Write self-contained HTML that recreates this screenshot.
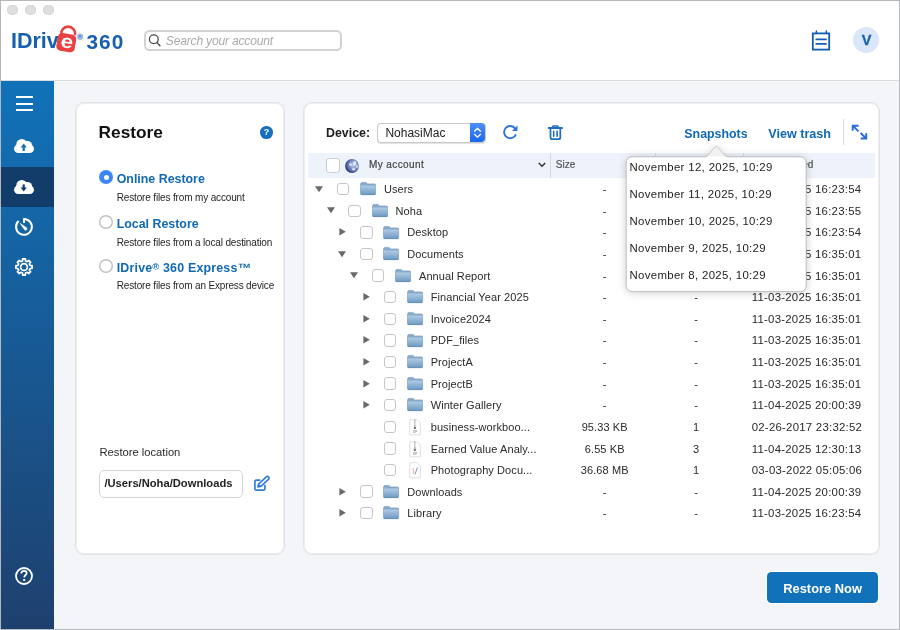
<!DOCTYPE html>
<html><head><meta charset="utf-8"><title>IDrive 360 Restore</title>
<style>
html,body{margin:0;padding:0;width:900px;height:630px;overflow:hidden;}
body{position:relative;will-change:transform;font-family:"Liberation Sans", sans-serif;background:#f4f5f9;}
.t{position:absolute;white-space:nowrap;}
svg{overflow:visible;}
</style></head><body>
<div style="position:absolute;left:0px;top:0px;width:900px;height:630px;background:#f4f5f9;"></div>
<div style="position:absolute;left:0px;top:0px;width:900px;height:80px;background:#ffffff;"></div>
<div style="position:absolute;left:0px;top:80px;width:900px;height:1px;background:#dcdcdc;"></div>
<div style="position:absolute;left:7.1px;top:4.5px;width:10.8px;height:10.8px;border-radius:50%;background:#dedede;box-shadow:inset 0 0 0 0.6px #d2d2d2;"></div>
<div style="position:absolute;left:25.1px;top:4.5px;width:10.8px;height:10.8px;border-radius:50%;background:#dedede;box-shadow:inset 0 0 0 0.6px #d2d2d2;"></div>
<div style="position:absolute;left:43.1px;top:4.5px;width:10.8px;height:10.8px;border-radius:50%;background:#dedede;box-shadow:inset 0 0 0 0.6px #d2d2d2;"></div>
<div class="t" style="left:11.00px;top:31.30px;font-size:21.5px;line-height:21.5px;font-weight:700;color:#1660b0;font-style:normal;">IDriv</div>
<svg style="position:absolute;left:52px;top:22px;" width="36" height="34" viewBox="52 22 36 34">
<path d="M61.23 34.6 A7 7 0 1 1 74.96 35.3" fill="none" stroke="#e8413f" stroke-width="2.6"/>
<g transform="rotate(10 66.3 42.6)">
<rect x="57" y="33.8" width="18.6" height="17.8" rx="4.5" fill="#e8413f"/>
</g>
<text x="0" y="0" text-anchor="middle" font-family="Liberation Sans" font-weight="700" font-size="19" fill="#ffffff" transform="translate(66.2 47.8) rotate(8) scale(1.18 1)">e</text>
</svg>
<svg style="position:absolute;left:76px;top:33px;" width="8" height="8" viewBox="0 0 8 8"><circle cx="4.1" cy="3.7" r="2.9" fill="#a7c4e6"/><circle cx="4.1" cy="3.7" r="2.9" fill="none" stroke="#7fa8dc" stroke-width="0.6"/><text x="4.1" y="5.2" text-anchor="middle" font-family="Liberation Sans" font-weight="700" font-size="4.2" fill="#4f86cf">R</text></svg>
<div class="t" style="left:86.50px;top:31.89px;font-size:20.8px;line-height:20.8px;font-weight:700;color:#1660b0;font-style:normal;letter-spacing:1.0px;">360</div>
<div style="position:absolute;left:144px;top:30px;width:194px;height:17px;border:2px solid #d3d3d3;border-radius:5.5px;background:#fff;"></div>
<svg style="position:absolute;left:148px;top:34px;" width="14" height="13" viewBox="0 0 14 13"><circle cx="5.8" cy="5.3" r="4.4" fill="none" stroke="#4a4a4a" stroke-width="1.25"/><path d="M9 8.6 L11.9 11.7" stroke="#4a4a4a" stroke-width="1.4" stroke-linecap="round"/></svg>
<div class="t" style="left:165.80px;top:35.26px;font-size:12.1px;line-height:12.1px;font-weight:400;color:#aaaaaa;font-style:italic;letter-spacing:-0.2px;">Search your account</div>
<svg style="position:absolute;left:810px;top:29px;" width="22" height="23" viewBox="0 0 22 23">
<rect x="2.8" y="4.4" width="16.4" height="16.2" fill="none" stroke="#135db0" stroke-width="1.8"/>
<path d="M6.4 2 V4.5 M16.3 2 V4.5" stroke="#135db0" stroke-width="1.5" stroke-linecap="round"/>
<path d="M6.2 10.4 H16 M6.2 14.9 H16" stroke="#135db0" stroke-width="1.7" stroke-linecap="round"/>
</svg>
<div style="position:absolute;left:852.6px;top:27.2px;width:26.2px;height:26.2px;border-radius:50%;background:#dae6f9;"></div>
<div class="t" style="left:716.50px;width:300px;text-align:center;top:33.23px;font-size:14.5px;line-height:14.5px;font-weight:700;color:#1a62b0;font-style:normal;-webkit-text-stroke:0.3px #1a62b0;">V</div>
<div style="position:absolute;left:0px;top:81px;width:54px;height:549px;background:linear-gradient(#1172b9, #1e406e);"></div>
<div style="position:absolute;left:0px;top:167px;width:54px;height:40px;background:#123c6a;"></div>
<div style="position:absolute;left:16px;top:96.2px;width:17px;height:2px;background:#fff;"></div>
<div style="position:absolute;left:16px;top:102.6px;width:17px;height:2px;background:#fff;"></div>
<div style="position:absolute;left:16px;top:109px;width:17px;height:2px;background:#fff;"></div>
<svg style="position:absolute;left:14.2px;top:138.8px;" width="20" height="14" viewBox="0 0 20 14"><g fill="#fff">
<circle cx="4.3" cy="9.7" r="4.3"/><circle cx="15.7" cy="9.7" r="4.3"/>
<circle cx="7.8" cy="5.5" r="5.5"/><circle cx="13.5" cy="6.5" r="4.6"/>
<rect x="4.3" y="6" width="11.4" height="8"/></g><path d="M9.7 12 V7.5" stroke="#1471b6" stroke-width="2.2"/><path d="M6.6 8.6 L9.7 4.6 L12.8 8.6 Z" fill="#1471b6"/></svg>
<svg style="position:absolute;left:14.2px;top:179.7px;" width="20" height="14" viewBox="0 0 20 14"><g fill="#fff">
<circle cx="4.3" cy="9.7" r="4.3"/><circle cx="15.7" cy="9.7" r="4.3"/>
<circle cx="7.8" cy="5.5" r="5.5"/><circle cx="13.5" cy="6.5" r="4.6"/>
<rect x="4.3" y="6" width="11.4" height="8"/></g><path d="M9.7 4.4 V8.4" stroke="#123c6a" stroke-width="2.2"/><path d="M6.6 7.6 L9.7 11.6 L12.8 7.6 Z" fill="#123c6a"/></svg>
<svg style="position:absolute;left:12px;top:215px;" width="24" height="24" viewBox="0 0 24 24">
<path d="M12 4 A7.9 7.9 0 1 1 6.6 6.1" fill="none" stroke="#fff" stroke-width="2"/>
<path d="M12 3.2 V8" stroke="#fff" stroke-width="2"/>
<path d="M8.2 8.4 L12.61 14.79 A1.4 1.4 0 0 0 14.59 12.81 Z" fill="#fff" stroke="#fff" stroke-width="0.6" stroke-linejoin="round"/>
</svg>
<svg style="position:absolute;left:12px;top:255px;" width="24" height="24" viewBox="0 0 24 24"><path d="M18.02 10.51 L20.09 10.65 L20.09 13.35 L18.02 13.49 L17.31 15.20 L18.67 16.77 L16.77 18.67 L15.20 17.31 L13.49 18.02 L13.35 20.09 L10.65 20.09 L10.51 18.02 L8.80 17.31 L7.23 18.67 L5.33 16.77 L6.69 15.20 L5.98 13.49 L3.91 13.35 L3.91 10.65 L5.98 10.51 L6.69 8.80 L5.33 7.23 L7.23 5.33 L8.80 6.69 L10.51 5.98 L10.65 3.91 L13.35 3.91 L13.49 5.98 L15.20 6.69 L16.77 5.33 L18.67 7.23 L17.31 8.80 Z" fill="none" stroke="#fff" stroke-width="1.7" stroke-linejoin="round"/><circle cx="12" cy="12" r="3.4" fill="none" stroke="#fff" stroke-width="1.7"/></svg>
<svg style="position:absolute;left:12px;top:564px;" width="24" height="24" viewBox="0 0 24 24"><circle cx="12" cy="12" r="8" fill="none" stroke="#fff" stroke-width="1.8"/><path d="M9.3 9.6 C9.3 7.6 10.6 6.8 12 6.8 C13.6 6.8 14.7 7.8 14.7 9.2 C14.7 10.9 12.2 11.2 12.2 13.4" fill="none" stroke="#fff" stroke-width="1.7"/><rect x="11.2" y="15" width="2" height="2" fill="#fff"/></svg>
<div style="position:absolute;left:75px;top:102px;width:208px;height:451px;background:#fff;border:1px solid #e1e2e5;box-shadow:inset 0 0 0 1px #efeff1;border-radius:9px;"></div>
<div class="t" style="left:98.60px;top:123.86px;font-size:17.3px;line-height:17.3px;font-weight:700;color:#111;font-style:normal;">Restore</div>
<div style="position:absolute;left:260.1px;top:126px;width:12.7px;height:12.7px;border-radius:50%;background:#1a6fbd;"></div>
<div class="t" style="left:116.40px;width:300px;text-align:center;top:127.88px;font-size:9px;line-height:9px;font-weight:700;color:#fff;font-style:normal;">?</div>
<div style="position:absolute;left:98.9px;top:170px;width:14.4px;height:14.4px;border-radius:50%;background:#3d86f7;"></div>
<div style="position:absolute;left:103.5px;top:174.6px;width:5.2px;height:5.2px;border-radius:50%;background:#fff;"></div>
<svg style="position:absolute;left:96px;top:212.4px;" width="20" height="20" viewBox="0 0 20 20"><circle cx="10" cy="10" r="6.3" fill="#fff" stroke="#c0c0c0" stroke-width="1.4"/></svg>
<svg style="position:absolute;left:96px;top:255.60000000000002px;" width="20" height="20" viewBox="0 0 20 20"><circle cx="10" cy="10" r="6.3" fill="#fff" stroke="#c0c0c0" stroke-width="1.4"/></svg>
<div class="t" style="left:116.70px;top:173.00px;font-size:12.4px;line-height:12.4px;font-weight:700;color:#1169b5;font-style:normal;">Online Restore</div>
<div class="t" style="left:116.70px;top:193.03px;font-size:10px;line-height:10px;font-weight:400;color:#262626;font-style:normal;letter-spacing:-0.15px;">Restore files from my account</div>
<div class="t" style="left:116.70px;top:218.00px;font-size:12.4px;line-height:12.4px;font-weight:700;color:#1169b5;font-style:normal;">Local Restore</div>
<div class="t" style="left:116.70px;top:238.03px;font-size:10px;line-height:10px;font-weight:400;color:#262626;font-style:normal;letter-spacing:-0.15px;">Restore files from a local destination</div>
<div class="t" style="left:116.70px;top:261.00px;font-size:12.4px;line-height:12.4px;font-weight:700;color:#1169b5;font-style:normal;letter-spacing:0.2px;">IDrive<span style="font-size:0.75em;vertical-align:0.25em">®</span> 360 Express<span style="font-size:1.1em;vertical-align:-0.05em">™</span></div>
<div class="t" style="left:116.70px;top:281.04px;font-size:10px;line-height:10px;font-weight:400;color:#262626;font-style:normal;letter-spacing:-0.15px;">Restore files from an Express device</div>
<div class="t" style="left:99.50px;top:447.02px;font-size:11.2px;line-height:11.2px;font-weight:400;color:#2a2a2a;font-style:normal;">Restore location</div>
<div style="position:absolute;left:99px;top:470px;width:141.5px;height:25.5px;border:1px solid #d6d6d6;border-radius:5px;background:#fff;"></div>
<div class="t" style="left:104.40px;top:478.02px;font-size:11.2px;line-height:11.2px;font-weight:700;color:#1e1e1e;font-style:normal;">/Users/Noha/Downloads</div>
<svg style="position:absolute;left:248px;top:472px;" width="26" height="24" viewBox="248 472 26 24">
<path d="M259.8 480.1 H256.3 Q254.9 480.1 254.9 481.5 V488.7 Q254.9 490.1 256.3 490.1 H263.5 Q264.9 490.1 264.9 488.7 V485.3" fill="none" stroke="#2f7be0" stroke-width="1.65" stroke-linecap="round"/>
<path d="M257.9 486.9 L258.8 483.8 L266.3 476.8 Q267.4 475.8 268.5 476.8 L268.8 477.1 Q269.8 478.2 268.7 479.2 L261.2 486.2 Z" fill="none" stroke="#2f7be0" stroke-width="1.6" stroke-linejoin="round"/>
<path d="M257.6 487.3 L258.6 483.6 L261.3 486.2 Z" fill="#2f7be0"/>
</svg>
<div style="position:absolute;left:303px;top:102px;width:575px;height:451px;background:#fff;border:1px solid #e1e2e5;box-shadow:inset 0 0 0 1px #efeff1;border-radius:9px;"></div>
<div class="t" style="left:326.00px;top:127.00px;font-size:12.4px;line-height:12.4px;font-weight:700;color:#1e1e1e;font-style:normal;">Device:</div>
<div style="position:absolute;left:377.4px;top:123.4px;width:106.6px;height:17.2px;border:0.8px solid #c9c9c9;border-radius:4px;background:#fff;box-shadow:0 0.5px 1px rgba(0,0,0,0.12);"></div>
<div style="position:absolute;left:470px;top:123.4px;width:15px;height:18.6px;border-radius:0 4px 4px 0;background:linear-gradient(#4f8ff8,#1b66f3);"></div>
<svg style="position:absolute;left:470px;top:123px;" width="15" height="19" viewBox="0 0 15 19"><path d="M4.5 8.2 L7.5 5.3 L10.5 8.2 M4.5 11.3 L7.5 14.2 L10.5 11.3" fill="none" stroke="#fff" stroke-width="1.25" stroke-linecap="round" stroke-linejoin="round"/></svg>
<div class="t" style="left:385.40px;top:127.34px;font-size:12px;line-height:12px;font-weight:400;color:#222;font-style:normal;">NohasiMac</div>
<svg style="position:absolute;left:501px;top:123px;" width="18" height="18" viewBox="0 0 18 18">
<path d="M14.2 5.6 A6.1 6.1 0 1 0 14.9 11.3" fill="none" stroke="#2f74d8" stroke-width="1.9"/>
<path d="M16.5 2.5 L16.5 8 L11 8 Z" fill="#2f74d8"/>
</svg>
<svg style="position:absolute;left:546px;top:122px;" width="18" height="19" viewBox="0 0 18 19">
<path d="M2.7 6 H16.1" stroke="#1f6fbf" stroke-width="1.8" stroke-linecap="round"/>
<rect x="6.6" y="3.9" width="5.6" height="2.4" rx="0.8" fill="none" stroke="#1f6fbf" stroke-width="1.5"/>
<path d="M4.5 6.6 V15.4 Q4.5 17.1 6.2 17.1 H12.6 Q14.3 17.1 14.3 15.4 V6.6" fill="none" stroke="#1f6fbf" stroke-width="1.75"/>
<path d="M7.7 9.2 V14.2 M11.1 9.2 V14.2" stroke="#1f6fbf" stroke-width="1.6" stroke-linecap="round"/>
</svg>
<div class="t" style="left:684.30px;top:128.00px;font-size:12.4px;line-height:12.4px;font-weight:700;color:#1169b5;font-style:normal;">Snapshots</div>
<div class="t" style="left:768.30px;top:127.83px;font-size:12.6px;line-height:12.6px;font-weight:700;color:#1169b5;font-style:normal;">View trash</div>
<div style="position:absolute;left:843.4px;top:119px;width:1px;height:26px;background:#d9dde3;"></div>
<svg style="position:absolute;left:850px;top:124px;" width="19" height="17" viewBox="0 0 19 17">
<path d="M8.6 1.7 H2.7 V6.7 M2.9 1.9 L8.6 7.4" fill="none" stroke="#2a6bd6" stroke-width="1.9"/>
<path d="M10.7 14.5 H16.2 V9.2 M16 14.3 L10.6 9" fill="none" stroke="#2a6bd6" stroke-width="1.9"/>
</svg>
<div style="position:absolute;left:307.7px;top:153px;width:567.3px;height:25px;background:#eef2fa;"></div>
<div style="position:absolute;left:326.2px;top:158.3px;width:11.6px;height:12.4px;border:1px solid #cbcbcb;border-radius:3.5px;background:#fff;"></div>
<svg style="position:absolute;left:345px;top:158.5px;" width="14" height="14" viewBox="0 0 14 14">
<defs><radialGradient id="gl" cx="0.62" cy="0.42" r="0.72"><stop offset="0" stop-color="#c3cfea"/><stop offset="0.5" stop-color="#7087c0"/><stop offset="0.85" stop-color="#2c3a78"/><stop offset="1" stop-color="#18204c"/></radialGradient></defs>
<circle cx="7" cy="7" r="6.9" fill="url(#gl)"/>
<g fill="#eef2fb" opacity="0.8"><ellipse cx="9.6" cy="4.2" rx="1.6" ry="2.2"/><ellipse cx="5.6" cy="5.6" rx="1.5" ry="1.3"/><ellipse cx="8.6" cy="10.2" rx="1.6" ry="1.3"/><ellipse cx="12" cy="7.6" rx="0.8" ry="1.6"/></g>
</svg>
<div class="t" style="left:369.00px;top:160.03px;font-size:10px;line-height:10px;font-weight:400;color:#444;font-style:normal;letter-spacing:0.4px;-webkit-text-stroke:0.2px #444;">My account</div>
<svg style="position:absolute;left:537px;top:161px;" width="10" height="8" viewBox="0 0 10 8"><path d="M1.8 2 L5 5.2 L8.2 2" fill="none" stroke="#333" stroke-width="1.5"/></svg>
<div style="position:absolute;left:550px;top:153px;width:1px;height:25px;background:#d3d7de;"></div>
<div class="t" style="left:555.80px;top:160.03px;font-size:10px;line-height:10px;font-weight:400;color:#555;font-style:normal;-webkit-text-stroke:0.2px #555;">Size</div>
<div style="position:absolute;left:655.4px;top:153px;width:1px;height:25px;background:#d3d7de;"></div>
<div style="position:absolute;left:743px;top:153px;width:1px;height:25px;background:#d3d7de;"></div>
<div class="t" style="left:513.40px;width:300px;text-align:right;top:160.03px;font-size:10px;line-height:10px;font-weight:400;color:#555;font-style:normal;-webkit-text-stroke:0.2px #555;">Modified</div>
<svg style="position:absolute;left:315.0px;top:185.8px;" width="8" height="6.5" viewBox="0 0 8 6.5"><path d="M0 0.2 H8 L4 6.2 Z" fill="#6a6a6a"/></svg>
<div style="position:absolute;left:336.70px;top:182.90px;width:10.6px;height:10.6px;border:0.9px solid #c6c6c6;border-radius:3px;background:#fff;"></div>
<svg style="position:absolute;left:360.0px;top:182.4px;" width="16" height="13.2" viewBox="0 0 16 13.2"><defs><linearGradient id="fg" x1="0" y1="0" x2="0" y2="1"><stop offset="0" stop-color="#b2cce4"/><stop offset="1" stop-color="#6e9bc5"/></linearGradient></defs>
<path d="M0.5 2.4 Q0.5 0.4 2 0.4 H5.4 Q6.4 0.4 7 1.3 L7.4 1.9 H14.4 Q15.6 1.9 15.6 3.1 V11.8 Q15.6 12.7 14.6 12.7 H1.5 Q0.5 12.7 0.5 11.8 Z" fill="#88aacb" stroke="#7397bb" stroke-width="0.6"/>
<rect x="0.6" y="3.4" width="14.9" height="9.2" rx="0.9" fill="url(#fg)"/>
<path d="M1 12.45 H15.1" stroke="#5f88b1" stroke-width="0.7"/></svg>
<div class="t" style="left:383.90px;top:184.19px;font-size:11px;line-height:11px;font-weight:400;color:#2a2a2a;font-style:normal;letter-spacing:0.08px;">Users</div>
<div class="t" style="left:454.70px;width:300px;text-align:center;top:184.19px;font-size:11px;line-height:11px;font-weight:400;color:#2a2a2a;font-style:normal;letter-spacing:0.1px;">-</div>
<div class="t" style="left:546.10px;width:300px;text-align:center;top:184.19px;font-size:11px;line-height:11px;font-weight:400;color:#2a2a2a;font-style:normal;">-</div>
<div class="t" style="left:751.70px;top:183.85px;font-size:11.4px;line-height:11.4px;font-weight:400;color:#2a2a2a;font-style:normal;letter-spacing:0.25px;">11-03-2025 16:23:54</div>
<svg style="position:absolute;left:326.7px;top:207.4px;" width="8" height="6.5" viewBox="0 0 8 6.5"><path d="M0 0.2 H8 L4 6.2 Z" fill="#6a6a6a"/></svg>
<div style="position:absolute;left:348.40px;top:204.50px;width:10.6px;height:10.6px;border:0.9px solid #c6c6c6;border-radius:3px;background:#fff;"></div>
<svg style="position:absolute;left:371.7px;top:204.0px;" width="16" height="13.2" viewBox="0 0 16 13.2"><defs><linearGradient id="fg" x1="0" y1="0" x2="0" y2="1"><stop offset="0" stop-color="#b2cce4"/><stop offset="1" stop-color="#6e9bc5"/></linearGradient></defs>
<path d="M0.5 2.4 Q0.5 0.4 2 0.4 H5.4 Q6.4 0.4 7 1.3 L7.4 1.9 H14.4 Q15.6 1.9 15.6 3.1 V11.8 Q15.6 12.7 14.6 12.7 H1.5 Q0.5 12.7 0.5 11.8 Z" fill="#88aacb" stroke="#7397bb" stroke-width="0.6"/>
<rect x="0.6" y="3.4" width="14.9" height="9.2" rx="0.9" fill="url(#fg)"/>
<path d="M1 12.45 H15.1" stroke="#5f88b1" stroke-width="0.7"/></svg>
<div class="t" style="left:395.60px;top:206.19px;font-size:11px;line-height:11px;font-weight:400;color:#2a2a2a;font-style:normal;letter-spacing:0.08px;">Noha</div>
<div class="t" style="left:454.70px;width:300px;text-align:center;top:206.19px;font-size:11px;line-height:11px;font-weight:400;color:#2a2a2a;font-style:normal;letter-spacing:0.1px;">-</div>
<div class="t" style="left:546.10px;width:300px;text-align:center;top:206.19px;font-size:11px;line-height:11px;font-weight:400;color:#2a2a2a;font-style:normal;">-</div>
<div class="t" style="left:751.70px;top:205.85px;font-size:11.4px;line-height:11.4px;font-weight:400;color:#2a2a2a;font-style:normal;letter-spacing:0.25px;">11-03-2025 16:23:55</div>
<svg style="position:absolute;left:339.4px;top:228.39999999999998px;" width="7" height="7.6" viewBox="0 0 7 7.6"><path d="M0.4 0 L6.8 3.8 L0.4 7.6 Z" fill="#6a6a6a"/></svg>
<div style="position:absolute;left:360.10px;top:226.10px;width:10.6px;height:10.6px;border:0.9px solid #c6c6c6;border-radius:3px;background:#fff;"></div>
<svg style="position:absolute;left:383.4px;top:225.6px;" width="16" height="13.2" viewBox="0 0 16 13.2"><defs><linearGradient id="fg" x1="0" y1="0" x2="0" y2="1"><stop offset="0" stop-color="#b2cce4"/><stop offset="1" stop-color="#6e9bc5"/></linearGradient></defs>
<path d="M0.5 2.4 Q0.5 0.4 2 0.4 H5.4 Q6.4 0.4 7 1.3 L7.4 1.9 H14.4 Q15.6 1.9 15.6 3.1 V11.8 Q15.6 12.7 14.6 12.7 H1.5 Q0.5 12.7 0.5 11.8 Z" fill="#88aacb" stroke="#7397bb" stroke-width="0.6"/>
<rect x="0.6" y="3.4" width="14.9" height="9.2" rx="0.9" fill="url(#fg)"/>
<path d="M1 12.45 H15.1" stroke="#5f88b1" stroke-width="0.7"/></svg>
<div class="t" style="left:407.30px;top:227.19px;font-size:11px;line-height:11px;font-weight:400;color:#2a2a2a;font-style:normal;letter-spacing:0.08px;">Desktop</div>
<div class="t" style="left:454.70px;width:300px;text-align:center;top:227.19px;font-size:11px;line-height:11px;font-weight:400;color:#2a2a2a;font-style:normal;letter-spacing:0.1px;">-</div>
<div class="t" style="left:546.10px;width:300px;text-align:center;top:227.19px;font-size:11px;line-height:11px;font-weight:400;color:#2a2a2a;font-style:normal;">-</div>
<div class="t" style="left:751.70px;top:226.85px;font-size:11.4px;line-height:11.4px;font-weight:400;color:#2a2a2a;font-style:normal;letter-spacing:0.25px;">11-03-2025 16:23:54</div>
<svg style="position:absolute;left:338.4px;top:250.60000000000002px;" width="8" height="6.5" viewBox="0 0 8 6.5"><path d="M0 0.2 H8 L4 6.2 Z" fill="#6a6a6a"/></svg>
<div style="position:absolute;left:360.10px;top:247.70px;width:10.6px;height:10.6px;border:0.9px solid #c6c6c6;border-radius:3px;background:#fff;"></div>
<svg style="position:absolute;left:383.4px;top:247.20000000000002px;" width="16" height="13.2" viewBox="0 0 16 13.2"><defs><linearGradient id="fg" x1="0" y1="0" x2="0" y2="1"><stop offset="0" stop-color="#b2cce4"/><stop offset="1" stop-color="#6e9bc5"/></linearGradient></defs>
<path d="M0.5 2.4 Q0.5 0.4 2 0.4 H5.4 Q6.4 0.4 7 1.3 L7.4 1.9 H14.4 Q15.6 1.9 15.6 3.1 V11.8 Q15.6 12.7 14.6 12.7 H1.5 Q0.5 12.7 0.5 11.8 Z" fill="#88aacb" stroke="#7397bb" stroke-width="0.6"/>
<rect x="0.6" y="3.4" width="14.9" height="9.2" rx="0.9" fill="url(#fg)"/>
<path d="M1 12.45 H15.1" stroke="#5f88b1" stroke-width="0.7"/></svg>
<div class="t" style="left:407.30px;top:249.19px;font-size:11px;line-height:11px;font-weight:400;color:#2a2a2a;font-style:normal;letter-spacing:0.08px;">Documents</div>
<div class="t" style="left:454.70px;width:300px;text-align:center;top:249.19px;font-size:11px;line-height:11px;font-weight:400;color:#2a2a2a;font-style:normal;letter-spacing:0.1px;">-</div>
<div class="t" style="left:546.10px;width:300px;text-align:center;top:249.19px;font-size:11px;line-height:11px;font-weight:400;color:#2a2a2a;font-style:normal;">-</div>
<div class="t" style="left:751.70px;top:248.85px;font-size:11.4px;line-height:11.4px;font-weight:400;color:#2a2a2a;font-style:normal;letter-spacing:0.25px;">11-03-2025 16:35:01</div>
<svg style="position:absolute;left:350.1px;top:272.20000000000005px;" width="8" height="6.5" viewBox="0 0 8 6.5"><path d="M0 0.2 H8 L4 6.2 Z" fill="#6a6a6a"/></svg>
<div style="position:absolute;left:371.80px;top:269.30px;width:10.6px;height:10.6px;border:0.9px solid #c6c6c6;border-radius:3px;background:#fff;"></div>
<svg style="position:absolute;left:395.1px;top:268.8px;" width="16" height="13.2" viewBox="0 0 16 13.2"><defs><linearGradient id="fg" x1="0" y1="0" x2="0" y2="1"><stop offset="0" stop-color="#b2cce4"/><stop offset="1" stop-color="#6e9bc5"/></linearGradient></defs>
<path d="M0.5 2.4 Q0.5 0.4 2 0.4 H5.4 Q6.4 0.4 7 1.3 L7.4 1.9 H14.4 Q15.6 1.9 15.6 3.1 V11.8 Q15.6 12.7 14.6 12.7 H1.5 Q0.5 12.7 0.5 11.8 Z" fill="#88aacb" stroke="#7397bb" stroke-width="0.6"/>
<rect x="0.6" y="3.4" width="14.9" height="9.2" rx="0.9" fill="url(#fg)"/>
<path d="M1 12.45 H15.1" stroke="#5f88b1" stroke-width="0.7"/></svg>
<div class="t" style="left:419.00px;top:271.19px;font-size:11px;line-height:11px;font-weight:400;color:#2a2a2a;font-style:normal;letter-spacing:0.08px;">Annual Report</div>
<div class="t" style="left:454.70px;width:300px;text-align:center;top:271.19px;font-size:11px;line-height:11px;font-weight:400;color:#2a2a2a;font-style:normal;letter-spacing:0.1px;">-</div>
<div class="t" style="left:546.10px;width:300px;text-align:center;top:271.19px;font-size:11px;line-height:11px;font-weight:400;color:#2a2a2a;font-style:normal;">-</div>
<div class="t" style="left:751.70px;top:270.85px;font-size:11.4px;line-height:11.4px;font-weight:400;color:#2a2a2a;font-style:normal;letter-spacing:0.25px;">11-03-2025 16:35:01</div>
<svg style="position:absolute;left:362.8px;top:293.2px;" width="7" height="7.6" viewBox="0 0 7 7.6"><path d="M0.4 0 L6.8 3.8 L0.4 7.6 Z" fill="#6a6a6a"/></svg>
<div style="position:absolute;left:383.50px;top:290.90px;width:10.6px;height:10.6px;border:0.9px solid #c6c6c6;border-radius:3px;background:#fff;"></div>
<svg style="position:absolute;left:406.8px;top:290.4px;" width="16" height="13.2" viewBox="0 0 16 13.2"><defs><linearGradient id="fg" x1="0" y1="0" x2="0" y2="1"><stop offset="0" stop-color="#b2cce4"/><stop offset="1" stop-color="#6e9bc5"/></linearGradient></defs>
<path d="M0.5 2.4 Q0.5 0.4 2 0.4 H5.4 Q6.4 0.4 7 1.3 L7.4 1.9 H14.4 Q15.6 1.9 15.6 3.1 V11.8 Q15.6 12.7 14.6 12.7 H1.5 Q0.5 12.7 0.5 11.8 Z" fill="#88aacb" stroke="#7397bb" stroke-width="0.6"/>
<rect x="0.6" y="3.4" width="14.9" height="9.2" rx="0.9" fill="url(#fg)"/>
<path d="M1 12.45 H15.1" stroke="#5f88b1" stroke-width="0.7"/></svg>
<div class="t" style="left:430.70px;top:292.19px;font-size:11px;line-height:11px;font-weight:400;color:#2a2a2a;font-style:normal;letter-spacing:0.08px;">Financial Year 2025</div>
<div class="t" style="left:454.70px;width:300px;text-align:center;top:292.19px;font-size:11px;line-height:11px;font-weight:400;color:#2a2a2a;font-style:normal;letter-spacing:0.1px;">-</div>
<div class="t" style="left:546.10px;width:300px;text-align:center;top:292.19px;font-size:11px;line-height:11px;font-weight:400;color:#2a2a2a;font-style:normal;">-</div>
<div class="t" style="left:751.70px;top:291.85px;font-size:11.4px;line-height:11.4px;font-weight:400;color:#2a2a2a;font-style:normal;letter-spacing:0.25px;">11-03-2025 16:35:01</div>
<svg style="position:absolute;left:362.8px;top:314.8px;" width="7" height="7.6" viewBox="0 0 7 7.6"><path d="M0.4 0 L6.8 3.8 L0.4 7.6 Z" fill="#6a6a6a"/></svg>
<div style="position:absolute;left:383.50px;top:312.50px;width:10.6px;height:10.6px;border:0.9px solid #c6c6c6;border-radius:3px;background:#fff;"></div>
<svg style="position:absolute;left:406.8px;top:312.0px;" width="16" height="13.2" viewBox="0 0 16 13.2"><defs><linearGradient id="fg" x1="0" y1="0" x2="0" y2="1"><stop offset="0" stop-color="#b2cce4"/><stop offset="1" stop-color="#6e9bc5"/></linearGradient></defs>
<path d="M0.5 2.4 Q0.5 0.4 2 0.4 H5.4 Q6.4 0.4 7 1.3 L7.4 1.9 H14.4 Q15.6 1.9 15.6 3.1 V11.8 Q15.6 12.7 14.6 12.7 H1.5 Q0.5 12.7 0.5 11.8 Z" fill="#88aacb" stroke="#7397bb" stroke-width="0.6"/>
<rect x="0.6" y="3.4" width="14.9" height="9.2" rx="0.9" fill="url(#fg)"/>
<path d="M1 12.45 H15.1" stroke="#5f88b1" stroke-width="0.7"/></svg>
<div class="t" style="left:430.70px;top:314.19px;font-size:11px;line-height:11px;font-weight:400;color:#2a2a2a;font-style:normal;letter-spacing:0.08px;">Invoice2024</div>
<div class="t" style="left:454.70px;width:300px;text-align:center;top:314.19px;font-size:11px;line-height:11px;font-weight:400;color:#2a2a2a;font-style:normal;letter-spacing:0.1px;">-</div>
<div class="t" style="left:546.10px;width:300px;text-align:center;top:314.19px;font-size:11px;line-height:11px;font-weight:400;color:#2a2a2a;font-style:normal;">-</div>
<div class="t" style="left:751.70px;top:313.85px;font-size:11.4px;line-height:11.4px;font-weight:400;color:#2a2a2a;font-style:normal;letter-spacing:0.25px;">11-03-2025 16:35:01</div>
<svg style="position:absolute;left:362.8px;top:336.4px;" width="7" height="7.6" viewBox="0 0 7 7.6"><path d="M0.4 0 L6.8 3.8 L0.4 7.6 Z" fill="#6a6a6a"/></svg>
<div style="position:absolute;left:383.50px;top:334.10px;width:10.6px;height:10.6px;border:0.9px solid #c6c6c6;border-radius:3px;background:#fff;"></div>
<svg style="position:absolute;left:406.8px;top:333.59999999999997px;" width="16" height="13.2" viewBox="0 0 16 13.2"><defs><linearGradient id="fg" x1="0" y1="0" x2="0" y2="1"><stop offset="0" stop-color="#b2cce4"/><stop offset="1" stop-color="#6e9bc5"/></linearGradient></defs>
<path d="M0.5 2.4 Q0.5 0.4 2 0.4 H5.4 Q6.4 0.4 7 1.3 L7.4 1.9 H14.4 Q15.6 1.9 15.6 3.1 V11.8 Q15.6 12.7 14.6 12.7 H1.5 Q0.5 12.7 0.5 11.8 Z" fill="#88aacb" stroke="#7397bb" stroke-width="0.6"/>
<rect x="0.6" y="3.4" width="14.9" height="9.2" rx="0.9" fill="url(#fg)"/>
<path d="M1 12.45 H15.1" stroke="#5f88b1" stroke-width="0.7"/></svg>
<div class="t" style="left:430.70px;top:335.19px;font-size:11px;line-height:11px;font-weight:400;color:#2a2a2a;font-style:normal;letter-spacing:0.08px;">PDF_files</div>
<div class="t" style="left:454.70px;width:300px;text-align:center;top:335.19px;font-size:11px;line-height:11px;font-weight:400;color:#2a2a2a;font-style:normal;letter-spacing:0.1px;">-</div>
<div class="t" style="left:546.10px;width:300px;text-align:center;top:335.19px;font-size:11px;line-height:11px;font-weight:400;color:#2a2a2a;font-style:normal;">-</div>
<div class="t" style="left:751.70px;top:334.85px;font-size:11.4px;line-height:11.4px;font-weight:400;color:#2a2a2a;font-style:normal;letter-spacing:0.25px;">11-03-2025 16:35:01</div>
<svg style="position:absolute;left:362.8px;top:358.0px;" width="7" height="7.6" viewBox="0 0 7 7.6"><path d="M0.4 0 L6.8 3.8 L0.4 7.6 Z" fill="#6a6a6a"/></svg>
<div style="position:absolute;left:383.50px;top:355.70px;width:10.6px;height:10.6px;border:0.9px solid #c6c6c6;border-radius:3px;background:#fff;"></div>
<svg style="position:absolute;left:406.8px;top:355.2px;" width="16" height="13.2" viewBox="0 0 16 13.2"><defs><linearGradient id="fg" x1="0" y1="0" x2="0" y2="1"><stop offset="0" stop-color="#b2cce4"/><stop offset="1" stop-color="#6e9bc5"/></linearGradient></defs>
<path d="M0.5 2.4 Q0.5 0.4 2 0.4 H5.4 Q6.4 0.4 7 1.3 L7.4 1.9 H14.4 Q15.6 1.9 15.6 3.1 V11.8 Q15.6 12.7 14.6 12.7 H1.5 Q0.5 12.7 0.5 11.8 Z" fill="#88aacb" stroke="#7397bb" stroke-width="0.6"/>
<rect x="0.6" y="3.4" width="14.9" height="9.2" rx="0.9" fill="url(#fg)"/>
<path d="M1 12.45 H15.1" stroke="#5f88b1" stroke-width="0.7"/></svg>
<div class="t" style="left:430.70px;top:357.19px;font-size:11px;line-height:11px;font-weight:400;color:#2a2a2a;font-style:normal;letter-spacing:0.08px;">ProjectA</div>
<div class="t" style="left:454.70px;width:300px;text-align:center;top:357.19px;font-size:11px;line-height:11px;font-weight:400;color:#2a2a2a;font-style:normal;letter-spacing:0.1px;">-</div>
<div class="t" style="left:546.10px;width:300px;text-align:center;top:357.19px;font-size:11px;line-height:11px;font-weight:400;color:#2a2a2a;font-style:normal;">-</div>
<div class="t" style="left:751.70px;top:356.85px;font-size:11.4px;line-height:11.4px;font-weight:400;color:#2a2a2a;font-style:normal;letter-spacing:0.25px;">11-03-2025 16:35:01</div>
<svg style="position:absolute;left:362.8px;top:379.6px;" width="7" height="7.6" viewBox="0 0 7 7.6"><path d="M0.4 0 L6.8 3.8 L0.4 7.6 Z" fill="#6a6a6a"/></svg>
<div style="position:absolute;left:383.50px;top:377.30px;width:10.6px;height:10.6px;border:0.9px solid #c6c6c6;border-radius:3px;background:#fff;"></div>
<svg style="position:absolute;left:406.8px;top:376.8px;" width="16" height="13.2" viewBox="0 0 16 13.2"><defs><linearGradient id="fg" x1="0" y1="0" x2="0" y2="1"><stop offset="0" stop-color="#b2cce4"/><stop offset="1" stop-color="#6e9bc5"/></linearGradient></defs>
<path d="M0.5 2.4 Q0.5 0.4 2 0.4 H5.4 Q6.4 0.4 7 1.3 L7.4 1.9 H14.4 Q15.6 1.9 15.6 3.1 V11.8 Q15.6 12.7 14.6 12.7 H1.5 Q0.5 12.7 0.5 11.8 Z" fill="#88aacb" stroke="#7397bb" stroke-width="0.6"/>
<rect x="0.6" y="3.4" width="14.9" height="9.2" rx="0.9" fill="url(#fg)"/>
<path d="M1 12.45 H15.1" stroke="#5f88b1" stroke-width="0.7"/></svg>
<div class="t" style="left:430.70px;top:379.19px;font-size:11px;line-height:11px;font-weight:400;color:#2a2a2a;font-style:normal;letter-spacing:0.08px;">ProjectB</div>
<div class="t" style="left:454.70px;width:300px;text-align:center;top:379.19px;font-size:11px;line-height:11px;font-weight:400;color:#2a2a2a;font-style:normal;letter-spacing:0.1px;">-</div>
<div class="t" style="left:546.10px;width:300px;text-align:center;top:379.19px;font-size:11px;line-height:11px;font-weight:400;color:#2a2a2a;font-style:normal;">-</div>
<div class="t" style="left:751.70px;top:378.85px;font-size:11.4px;line-height:11.4px;font-weight:400;color:#2a2a2a;font-style:normal;letter-spacing:0.25px;">11-03-2025 16:35:01</div>
<svg style="position:absolute;left:362.8px;top:401.2px;" width="7" height="7.6" viewBox="0 0 7 7.6"><path d="M0.4 0 L6.8 3.8 L0.4 7.6 Z" fill="#6a6a6a"/></svg>
<div style="position:absolute;left:383.50px;top:398.90px;width:10.6px;height:10.6px;border:0.9px solid #c6c6c6;border-radius:3px;background:#fff;"></div>
<svg style="position:absolute;left:406.8px;top:398.4px;" width="16" height="13.2" viewBox="0 0 16 13.2"><defs><linearGradient id="fg" x1="0" y1="0" x2="0" y2="1"><stop offset="0" stop-color="#b2cce4"/><stop offset="1" stop-color="#6e9bc5"/></linearGradient></defs>
<path d="M0.5 2.4 Q0.5 0.4 2 0.4 H5.4 Q6.4 0.4 7 1.3 L7.4 1.9 H14.4 Q15.6 1.9 15.6 3.1 V11.8 Q15.6 12.7 14.6 12.7 H1.5 Q0.5 12.7 0.5 11.8 Z" fill="#88aacb" stroke="#7397bb" stroke-width="0.6"/>
<rect x="0.6" y="3.4" width="14.9" height="9.2" rx="0.9" fill="url(#fg)"/>
<path d="M1 12.45 H15.1" stroke="#5f88b1" stroke-width="0.7"/></svg>
<div class="t" style="left:430.70px;top:400.19px;font-size:11px;line-height:11px;font-weight:400;color:#2a2a2a;font-style:normal;letter-spacing:0.08px;">Winter Gallery</div>
<div class="t" style="left:454.70px;width:300px;text-align:center;top:400.19px;font-size:11px;line-height:11px;font-weight:400;color:#2a2a2a;font-style:normal;letter-spacing:0.1px;">-</div>
<div class="t" style="left:546.10px;width:300px;text-align:center;top:400.19px;font-size:11px;line-height:11px;font-weight:400;color:#2a2a2a;font-style:normal;">-</div>
<div class="t" style="left:751.70px;top:399.85px;font-size:11.4px;line-height:11.4px;font-weight:400;color:#2a2a2a;font-style:normal;letter-spacing:0.25px;">11-04-2025 20:00:39</div>
<div style="position:absolute;left:383.50px;top:420.50px;width:10.6px;height:10.6px;border:0.9px solid #c6c6c6;border-radius:3px;background:#fff;"></div>
<svg style="position:absolute;left:409px;top:419.0px;" width="12" height="16.5" viewBox="0 0 12 16.5"><path d="M0.8 0.6 H8 L11.4 4 V15.8 H0.8 Z" fill="#fff" stroke="#d8d8d8" stroke-width="0.8"/>
<path d="M5.8 0.8 V9" stroke="#8a8a8a" stroke-width="1.3" stroke-dasharray="1 0.8"/><rect x="4.9" y="7.6" width="1.9" height="2.4" fill="#6f6f6f"/>
<text x="6" y="14.4" text-anchor="middle" font-family="Liberation Sans" font-size="3" fill="#777">ZIP</text></svg>
<div class="t" style="left:430.70px;top:422.19px;font-size:11px;line-height:11px;font-weight:400;color:#2a2a2a;font-style:normal;letter-spacing:0.08px;">business-workboo...</div>
<div class="t" style="left:454.70px;width:300px;text-align:center;top:422.19px;font-size:11px;line-height:11px;font-weight:400;color:#2a2a2a;font-style:normal;letter-spacing:0.1px;">95.33 KB</div>
<div class="t" style="left:546.10px;width:300px;text-align:center;top:422.19px;font-size:11px;line-height:11px;font-weight:400;color:#2a2a2a;font-style:normal;">1</div>
<div class="t" style="left:751.70px;top:421.85px;font-size:11.4px;line-height:11.4px;font-weight:400;color:#2a2a2a;font-style:normal;letter-spacing:0.25px;">02-26-2017 23:32:52</div>
<div style="position:absolute;left:383.50px;top:442.10px;width:10.6px;height:10.6px;border:0.9px solid #c6c6c6;border-radius:3px;background:#fff;"></div>
<svg style="position:absolute;left:409px;top:440.6px;" width="12" height="16.5" viewBox="0 0 12 16.5"><path d="M0.8 0.6 H8 L11.4 4 V15.8 H0.8 Z" fill="#fff" stroke="#d8d8d8" stroke-width="0.8"/>
<path d="M5.8 0.8 V9" stroke="#8a8a8a" stroke-width="1.3" stroke-dasharray="1 0.8"/><rect x="4.9" y="7.6" width="1.9" height="2.4" fill="#6f6f6f"/>
<text x="6" y="14.4" text-anchor="middle" font-family="Liberation Sans" font-size="3" fill="#777">ZIP</text></svg>
<div class="t" style="left:430.70px;top:444.19px;font-size:11px;line-height:11px;font-weight:400;color:#2a2a2a;font-style:normal;letter-spacing:0.08px;">Earned Value Analy...</div>
<div class="t" style="left:454.70px;width:300px;text-align:center;top:444.19px;font-size:11px;line-height:11px;font-weight:400;color:#2a2a2a;font-style:normal;letter-spacing:0.1px;">6.55 KB</div>
<div class="t" style="left:546.10px;width:300px;text-align:center;top:444.19px;font-size:11px;line-height:11px;font-weight:400;color:#2a2a2a;font-style:normal;">3</div>
<div class="t" style="left:751.70px;top:443.85px;font-size:11.4px;line-height:11.4px;font-weight:400;color:#2a2a2a;font-style:normal;letter-spacing:0.25px;">11-04-2025 12:30:13</div>
<div style="position:absolute;left:383.50px;top:463.70px;width:10.6px;height:10.6px;border:0.9px solid #c6c6c6;border-radius:3px;background:#fff;"></div>
<svg style="position:absolute;left:409px;top:462.2px;" width="12" height="16.5" viewBox="0 0 12 16.5"><path d="M0.8 0.6 H8 L11.4 4 V15.8 H0.8 Z" fill="#fff" stroke="#d8d8d8" stroke-width="0.8"/>
<path d="M4 6 Q4.6 9 4.2 12" stroke="#e79a9a" stroke-width="0.8" fill="none"/><path d="M8.4 5.4 L6 12.4" stroke="#7b8fc7" stroke-width="1" fill="none"/></svg>
<div class="t" style="left:430.70px;top:465.19px;font-size:11px;line-height:11px;font-weight:400;color:#2a2a2a;font-style:normal;letter-spacing:0.08px;">Photography Docu...</div>
<div class="t" style="left:454.70px;width:300px;text-align:center;top:465.19px;font-size:11px;line-height:11px;font-weight:400;color:#2a2a2a;font-style:normal;letter-spacing:0.1px;">36.68 MB</div>
<div class="t" style="left:546.10px;width:300px;text-align:center;top:465.19px;font-size:11px;line-height:11px;font-weight:400;color:#2a2a2a;font-style:normal;">1</div>
<div class="t" style="left:751.70px;top:464.85px;font-size:11.4px;line-height:11.4px;font-weight:400;color:#2a2a2a;font-style:normal;letter-spacing:0.25px;">03-03-2022 05:05:06</div>
<svg style="position:absolute;left:339.4px;top:487.6px;" width="7" height="7.6" viewBox="0 0 7 7.6"><path d="M0.4 0 L6.8 3.8 L0.4 7.6 Z" fill="#6a6a6a"/></svg>
<div style="position:absolute;left:360.10px;top:485.30px;width:10.6px;height:10.6px;border:0.9px solid #c6c6c6;border-radius:3px;background:#fff;"></div>
<svg style="position:absolute;left:383.4px;top:484.8px;" width="16" height="13.2" viewBox="0 0 16 13.2"><defs><linearGradient id="fg" x1="0" y1="0" x2="0" y2="1"><stop offset="0" stop-color="#b2cce4"/><stop offset="1" stop-color="#6e9bc5"/></linearGradient></defs>
<path d="M0.5 2.4 Q0.5 0.4 2 0.4 H5.4 Q6.4 0.4 7 1.3 L7.4 1.9 H14.4 Q15.6 1.9 15.6 3.1 V11.8 Q15.6 12.7 14.6 12.7 H1.5 Q0.5 12.7 0.5 11.8 Z" fill="#88aacb" stroke="#7397bb" stroke-width="0.6"/>
<rect x="0.6" y="3.4" width="14.9" height="9.2" rx="0.9" fill="url(#fg)"/>
<path d="M1 12.45 H15.1" stroke="#5f88b1" stroke-width="0.7"/></svg>
<div class="t" style="left:407.30px;top:487.19px;font-size:11px;line-height:11px;font-weight:400;color:#2a2a2a;font-style:normal;letter-spacing:0.08px;">Downloads</div>
<div class="t" style="left:454.70px;width:300px;text-align:center;top:487.19px;font-size:11px;line-height:11px;font-weight:400;color:#2a2a2a;font-style:normal;letter-spacing:0.1px;">-</div>
<div class="t" style="left:546.10px;width:300px;text-align:center;top:487.19px;font-size:11px;line-height:11px;font-weight:400;color:#2a2a2a;font-style:normal;">-</div>
<div class="t" style="left:751.70px;top:486.85px;font-size:11.4px;line-height:11.4px;font-weight:400;color:#2a2a2a;font-style:normal;letter-spacing:0.25px;">11-04-2025 20:00:39</div>
<svg style="position:absolute;left:339.4px;top:509.2px;" width="7" height="7.6" viewBox="0 0 7 7.6"><path d="M0.4 0 L6.8 3.8 L0.4 7.6 Z" fill="#6a6a6a"/></svg>
<div style="position:absolute;left:360.10px;top:506.90px;width:10.6px;height:10.6px;border:0.9px solid #c6c6c6;border-radius:3px;background:#fff;"></div>
<svg style="position:absolute;left:383.4px;top:506.4px;" width="16" height="13.2" viewBox="0 0 16 13.2"><defs><linearGradient id="fg" x1="0" y1="0" x2="0" y2="1"><stop offset="0" stop-color="#b2cce4"/><stop offset="1" stop-color="#6e9bc5"/></linearGradient></defs>
<path d="M0.5 2.4 Q0.5 0.4 2 0.4 H5.4 Q6.4 0.4 7 1.3 L7.4 1.9 H14.4 Q15.6 1.9 15.6 3.1 V11.8 Q15.6 12.7 14.6 12.7 H1.5 Q0.5 12.7 0.5 11.8 Z" fill="#88aacb" stroke="#7397bb" stroke-width="0.6"/>
<rect x="0.6" y="3.4" width="14.9" height="9.2" rx="0.9" fill="url(#fg)"/>
<path d="M1 12.45 H15.1" stroke="#5f88b1" stroke-width="0.7"/></svg>
<div class="t" style="left:407.30px;top:508.19px;font-size:11px;line-height:11px;font-weight:400;color:#2a2a2a;font-style:normal;letter-spacing:0.08px;">Library</div>
<div class="t" style="left:454.70px;width:300px;text-align:center;top:508.19px;font-size:11px;line-height:11px;font-weight:400;color:#2a2a2a;font-style:normal;letter-spacing:0.1px;">-</div>
<div class="t" style="left:546.10px;width:300px;text-align:center;top:508.19px;font-size:11px;line-height:11px;font-weight:400;color:#2a2a2a;font-style:normal;">-</div>
<div class="t" style="left:751.70px;top:507.85px;font-size:11.4px;line-height:11.4px;font-weight:400;color:#2a2a2a;font-style:normal;letter-spacing:0.25px;">11-03-2025 16:23:54</div>
<svg style="position:absolute;left:600px;top:130px;filter:drop-shadow(0 1.5px 4px rgba(0,0,0,0.18));" width="230" height="180" viewBox="600 130 230 180"><path d="M632.2 156.8 H704.6 Q707.4 156.8 709.4 154.2 L714.4 147.6 Q716.4 145.4 718.4 147.6 L723.4 154.2 Q725.4 156.8 728.2 156.8 H800.2 A6 6 0 0 1 806.2 162.8 V285.6 A6 6 0 0 1 800.2 291.6 H632.2 A6 6 0 0 1 626.2 285.6 V162.8 A6 6 0 0 1 632.2 156.8 Z" fill="#ffffff" stroke="#b8b8b8" stroke-width="0.9"/>
<path d="M706.5 156.4 Q708.4 155.6 709.8 154 L714.6 148 Q716.4 146.2 718.2 148 L723 154 Q724.4 155.6 726.3 156.4 Z" fill="#f1f1f1"/></svg>
<div class="t" style="left:629.40px;top:161.85px;font-size:11.4px;line-height:11.4px;font-weight:400;color:#1e1e1e;font-style:normal;letter-spacing:0.35px;">November 12, 2025, 10:29</div>
<div class="t" style="left:629.40px;top:188.85px;font-size:11.4px;line-height:11.4px;font-weight:400;color:#1e1e1e;font-style:normal;letter-spacing:0.35px;">November 11, 2025, 10:29</div>
<div class="t" style="left:629.40px;top:215.85px;font-size:11.4px;line-height:11.4px;font-weight:400;color:#1e1e1e;font-style:normal;letter-spacing:0.35px;">November 10, 2025, 10:29</div>
<div class="t" style="left:629.40px;top:242.85px;font-size:11.4px;line-height:11.4px;font-weight:400;color:#1e1e1e;font-style:normal;letter-spacing:0.35px;">November 9, 2025, 10:29</div>
<div class="t" style="left:629.40px;top:269.85px;font-size:11.4px;line-height:11.4px;font-weight:400;color:#1e1e1e;font-style:normal;letter-spacing:0.35px;">November 8, 2025, 10:29</div>
<div style="position:absolute;left:766.9px;top:572.2px;width:111.4px;height:30.6px;background:#1172b9;border-radius:4.5px;box-shadow:0 0 0 1px #ffffff;"></div>
<div class="t" style="left:672.60px;width:300px;text-align:center;top:582.58px;font-size:12.9px;line-height:12.9px;font-weight:700;color:#fff;font-style:normal;">Restore Now</div>
<div style="position:absolute;left:0;top:0;width:898px;height:628px;border:1px solid #b4b8bd;"></div>
</body></html>
